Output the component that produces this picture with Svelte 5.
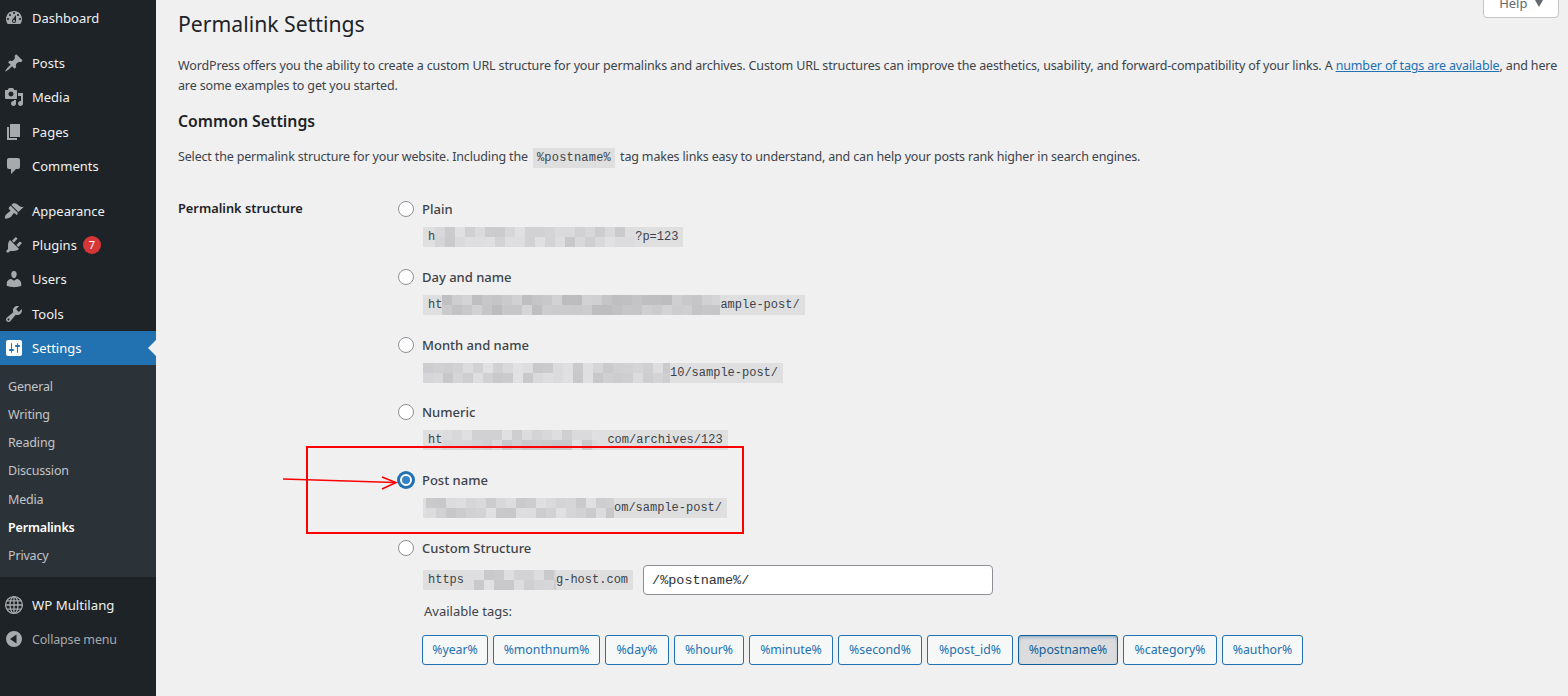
<script lang="ts">
  const icons = {
    dashboard: 'M3.76 16h12.48c1.1-1.37 1.76-3.11 1.76-5 0-4.42-3.58-8-8-8s-8 3.58-8 8c0 1.89.66 3.63 1.76 5zM10 4c.55 0 1 .45 1 1s-.45 1-1 1-1-.45-1-1 .45-1 1-1zM6 6c.55 0 1 .45 1 1s-.45 1-1 1-1-.45-1-1 .45-1 1-1zm8 0c.55 0 1 .45 1 1s-.45 1-1 1-1-.45-1-1 .45-1 1-1zm-5.37 5.55L12 7v6c0 1.1-.9 2-2 2s-2-.9-2-2c0-.57.24-1.08.63-1.45zM4 10c.55 0 1 .45 1 1s-.45 1-1 1-1-.45-1-1 .45-1 1-1zm12 0c.55 0 1 .45 1 1s-.45 1-1 1-1-.45-1-1 .45-1 1-1zm-5 3c0-.55-.45-1-1-1s-1 .45-1 1 .45 1 1 1 1-.45 1-1z',
    posts: 'M10.44 3.02l1.82-1.82 6.36 6.35-1.83 1.82c-1.05-.68-2.48-.57-3.41.36l-.75.75c-.92.93-1.04 2.35-.35 3.41l-1.83 1.82-2.41-2.41-2.8 2.79c-.42.42-3.38 2.71-3.8 2.29s1.86-3.39 2.28-3.81l2.79-2.79L4.1 9.36l1.83-1.82c1.05.69 2.48.57 3.4-.36l.75-.75c.93-.92 1.05-2.35.36-3.41z',
    media: 'M13 11V4c0-.55-.45-1-1-1h-1.67L9 1H5L3.67 3H2c-.55 0-1 .45-1 1v7c0 .55.45 1 1 1h10c.55 0 1-.45 1-1zM7 4.5c1.38 0 2.5 1.12 2.5 2.5S8.38 9.5 7 9.5 4.5 8.38 4.5 7 5.62 4.5 7 4.5zM14 6h5v10.5c0 1.38-1.12 2.5-2.5 2.5S14 17.88 14 16.5s1.12-2.5 2.5-2.5c.17 0 .34.02.5.05V9h-3V6zm-4 8.05V13h2v3.5c0 1.38-1.12 2.5-2.5 2.5S7 17.88 7 16.5 8.12 14 9.5 14c.17 0 .34.02.5.05z',
    pages: 'M6 15V2h10v13H6zm-1 1h8v2H3V5h2v11z',
    comments: 'M5 2h9c1.1 0 2 .9 2 2v7c0 1.1-.9 2-2 2h-2l-5 5v-5H5c-1.1 0-2-.9-2-2V4c0-1.1.9-2 2-2z',
    appearance: 'M14.48 11.06L7.41 3.99l1.5-1.5c.5-.56 2.3-.47 3.51.32 1.21.8 1.43 1.28 2.91 2.1 1.18.64 2.45 1.26 4.45.85zm-.71.71L6.7 4.7 4.93 6.47c-.39.39-.39 1.02 0 1.41l1.06 1.06c.39.39.39 1.03 0 1.42-.6.6-1.43 1.11-2.21 1.69-.35.26-.7.53-1.01.84C1.43 13.23.4 16.96 1.16 17.56c.77.59 4.5-.56 5.85-1.79.31-.31.58-.66.84-1.01.58-.78 1.09-1.61 1.69-2.21.39-.39 1.03-.39 1.42 0l1.06 1.06c.39.39 1.02.39 1.41 0z',
    plugins: 'M13.11 4.36L9.87 7.6 8 5.73l3.24-3.24c.35-.34 1.05-.2 1.56.32.52.51.66 1.21.31 1.55zm-8 1.77l.91-1.12 9.01 9.01-1.19.84c-.71.71-2.63 1.16-3.82 1.16H6.14L4.9 17.26c-.59.59-1.54.59-2.12 0-.59-.58-.59-1.53 0-2.12l1.24-1.24v-3.88c0-1.13.4-3.19 1.09-3.89zm7.26 3.97l3.24-3.24c.34-.35 1.04-.21 1.55.31.52.51.66 1.21.31 1.55l-3.24 3.25z',
    users: 'M10 9.25c-2.27 0-2.73-3.44-2.73-3.44C7 4.02 7.82 2 9.97 2c2.16 0 2.98 2.02 2.71 3.81 0 0-.41 3.44-2.68 3.44zm0 2.57L12.72 10c2.39 0 4.52 2.33 4.52 4.53v2.49s-3.65 1.13-7.24 1.13c-3.65 0-7.24-1.13-7.24-1.13v-2.49c0-2.25 1.94-4.48 4.47-4.48z',
    tools: 'M16.68 9.77c-1.34 1.34-3.3 1.67-4.95.99l-5.41 6.52c-.99.99-2.59.99-3.58 0s-.99-2.59 0-3.57l6.52-5.42c-.68-1.65-.35-3.61.99-4.95 1.28-1.28 3.12-1.62 4.72-1.06l-2.89 2.89 2.82 2.82 2.86-2.87c.53 1.58.18 3.39-1.08 4.65zM3.81 16.21c.4.39 1.04.39 1.43 0 .4-.4.4-1.04 0-1.43-.39-.4-1.03-.4-1.43 0-.39.39-.39 1.03 0 1.43z',
    settings: 'M18 16V4c0-1.1-.9-2-2-2H4c-1.1 0-2 .9-2 2v12c0 1.1.9 2 2 2h12c1.1 0 2-.9 2-2zM8 11h1c.55 0 1 .45 1 1s-.45 1-1 1H8v1.5c0 .28-.22.5-.5.5s-.5-.22-.5-.5V13H6c-.55 0-1-.45-1-1s.45-1 1-1h1V5.5c0-.28.22-.5.5-.5s.5.22.5.5V11zm5-2h-1c-.55 0-1-.45-1-1s.45-1 1-1h1V5.5c0-.28.22-.5.5-.5s.5.22.5.5V7h1c.55 0 1 .45 1 1s-.45 1-1 1h-1v5.5c0 .28-.22.5-.5.5s-.5-.22-.5-.5V9z',
    collapse: 'M10 2a8 8 0 1 0 0 16 8 8 0 0 0 0-16zm2.5 3.5v9L6 10z'
  };

  const groups = [
    [{ name: 'Dashboard', icon: 'dashboard' }],
    [
      { name: 'Posts', icon: 'posts' },
      { name: 'Media', icon: 'media' },
      { name: 'Pages', icon: 'pages' },
      { name: 'Comments', icon: 'comments' }
    ],
    [
      { name: 'Appearance', icon: 'appearance' },
      { name: 'Plugins', icon: 'plugins', badge: 7 },
      { name: 'Users', icon: 'users' },
      { name: 'Tools', icon: 'tools' },
      { name: 'Settings', icon: 'settings', active: true }
    ]
  ];

  const submenu = ['General', 'Writing', 'Reading', 'Discussion', 'Media', 'Permalinks', 'Privacy'];

  // blurred parts of the site url: width in px, then text either side
  const options = [
    { label: 'Plain', pre: 'h', blur: 200, post: '?p=123', seed: 3 },
    { label: 'Day and name', pre: 'ht', blur: 278, post: 'ample-post/', seed: 11, dark: true },
    { label: 'Month and name', pre: '', blur: 247, post: '10/sample-post/', seed: 23 },
    { label: 'Numeric', pre: 'ht', blur: 156, gap: 9, post: 'com/archives/123', seed: 31 },
    { label: 'Post name', pre: '', blur: 188, post: 'om/sample-post/', seed: 47, checked: true, inset: 3 }
  ];

  const tags = [
    { name: 'year', width: 66 },
    { name: 'monthnum', width: 107 },
    { name: 'day', width: 64 },
    { name: 'hour', width: 70 },
    { name: 'minute', width: 84 },
    { name: 'second', width: 84 },
    { name: 'post_id', width: 86 },
    { name: 'postname', width: 100 },
    { name: 'category', width: 94 },
    { name: 'author', width: 81 }
  ];

  function cells(width: number, seed: number, dark = false) {
    const out = [];
    let s = seed * 7919 + 17;
    for (let i = 0; i < Math.ceil(width / 10) * 2; i++) {
      s = (s * 1103515245 + 12345) & 0x7fffffff;
      const base = dark ? 188 : 200;
      const v = base + ((s >> 8) % 26);
      out.push(`rgb(${v},${v},${v + 2})`);
    }
    return out;
  }
</script>

{#snippet blurred(width, seed, dark)}
  <span class="blur" style="width:{width}px">
    {#each cells(width, seed, dark) as color}
      <i style="background:{color}"></i>
    {/each}
  </span>
{/snippet}

<div class="page">
  <nav class="sidebar">
    {#each groups as group}
      <ul class="menu">
        {#each group as item}
          <li class="item" class:active={item.active}>
            <svg viewBox="0 0 20 20" class="icon"><path d={icons[item.icon]} fill-rule="evenodd" /></svg>
            <span>{item.name}</span>
            {#if item.badge}<b class="badge">{item.badge}</b>{/if}
          </li>
        {/each}
      </ul>
    {/each}
    <ul class="sub">
      {#each submenu as name}
        <li class:current={name === 'Permalinks'}>{name}</li>
      {/each}
    </ul>
    <ul class="menu bottom">
      <li class="item">
        <svg viewBox="0 0 20 20" class="icon globe">
          <circle cx="10" cy="10" r="8.4" />
          <ellipse cx="10" cy="10" rx="4" ry="8.4" />
          <path d="M10 1.6v16.8M1.6 10h16.8M2.8 5.8h14.4M2.8 14.2h14.4" />
        </svg>
        <span>WP Multilang</span>
      </li>
      <li class="item collapse">
        <svg viewBox="0 0 20 20" class="icon"><path d={icons.collapse} fill-rule="evenodd" /></svg>
        <span>Collapse menu</span>
      </li>
    </ul>
  </nav>

  <main class="content">
    <h1>Permalink Settings</h1>
    <p class="intro">
      WordPress offers you the ability to create a custom URL structure for your permalinks and archives. Custom URL structures can improve the aesthetics, usability, and forward-compatibility of your links. A <a href="#tags">number of tags are available</a>, and here<br />are some examples to get you started.
    </p>
    <h2>Common Settings</h2>
    <p class="lead">
      Select the permalink structure for your website. Including the <code class="inline">%postname%</code> tag makes links easy to understand, and can help your posts rank higher in search engines.
    </p>

    <div class="form">
      <div class="th">Permalink structure</div>
      <div class="td">
        {#each options as opt}
          <div class="option">
            <label>
              <input type="radio" name="structure" checked={opt.checked} />
              {opt.label}
            </label>
            <code class="url" class:flush={!opt.pre}>{#if opt.inset}<span style="width:{opt.inset}px" class="spacer"></span>{/if}{opt.pre}{@render blurred(opt.blur, opt.seed, opt.dark)}{#if opt.gap}<span style="width:{opt.gap}px" class="spacer"></span>{/if}{opt.post}</code>
          </div>
        {/each}

        <div class="option custom">
          <label>
            <input type="radio" name="structure" />
            Custom Structure
          </label>
          <div class="custom-row">
            <code class="url">https{@render blurred(92, 59)}g-host.com</code>
            <input class="text" type="text" value="/%postname%/" />
          </div>
          <div class="avail">Available tags:</div>
          <div class="tags">
            {#each tags as tag}
              <button type="button" class="tag" class:on={tag.name === 'postname'} style="width:{tag.width}px">%{tag.name}%</button>
            {/each}
          </div>
        </div>
      </div>
    </div>
  </main>

  <button type="button" class="help">Help <span class="caret"></span></button>

  <div class="callout"></div>
  <svg class="arrow" viewBox="0 0 120 20" width="120" height="20">
    <path d="M0 6 L112 9.5" />
    <path d="M99 4 L113 9.5 L99 16" />
  </svg>
</div>

<style>
  :global(body) {
    margin: 0;
    background: #f0f0f1;
    overflow: hidden;
  }

  .page {
    position: relative;
    display: flex;
    height: 696px;
    overflow: hidden;
    font-family: "Noto Sans", "Open Sans", sans-serif;
    font-size: 13px;
    line-height: 20px;
    color: #3c434a;
  }

  .sidebar {
    flex: 0 0 156px;
    background: #1d2327;
    padding-top: 1px;
    color: #f0f0f1;
  }

  ul {
    list-style: none;
    margin: 0;
    padding: 0;
  }

  .menu {
    margin-bottom: 11px;
  }

  .menu:nth-of-type(3) {
    margin-bottom: 0;
  }

  .item {
    position: relative;
    display: flex;
    align-items: center;
    height: 34.2px;
    padding-left: 4px;
    font-size: 13px;
  }

  .item > span {
    margin-left: 8px;
  }

  .icon {
    width: 20px;
    height: 20px;
    flex: none;
    fill: #a7aaad;
  }

  .item.active {
    background: #2271b1;
    color: #fff;
  }

  .item.active .icon {
    fill: #fff;
  }

  .item.active::after {
    content: "";
    position: absolute;
    right: 0;
    top: 9px;
    border: 8px solid transparent;
    border-right-color: #f0f0f1;
    border-left-width: 0;
  }

  .badge {
    display: flex;
    align-items: center;
    justify-content: center;
    width: 18px;
    height: 18px;
    margin-left: 6px;
    border-radius: 50%;
    background: #d63638;
    color: #fff;
    font-size: 11px;
    font-weight: 400;
  }

  .sub {
    background: #2c3338;
    padding: 8px 0 6px;
    height: 198px;
    color: #c3c4c7;
    margin-bottom: 11px;
    font-size: 12.5px;
    letter-spacing: -0.17px;
  }

  .sub li {
    height: 28.2px;
    line-height: 28.2px;
    padding-left: 8px;
  }

  .sub .current {
    color: #fff;
    font-weight: 600;
  }

  .globe {
    fill: none;
    stroke: #a7aaad;
    stroke-width: 1.3;
  }

  .bottom .item:first-child span {
    font-size: 13.2px;
  }

  .collapse {
    color: #a7aaad;
  }

  .collapse span {
    padding-top: 2px;
    font-size: 12.5px;
    letter-spacing: -0.17px;
  }

  .content {
    flex: 1;
    min-width: 0;
    padding: 9px 0 0 22px;
    white-space: nowrap;
  }

  h1 {
    margin: 0 0 17px;
    font-size: 21.2px;
    line-height: 30px;
    font-weight: 400;
    color: #1d2327;
  }

  .intro,
  .lead {
    margin: 0;
    font-size: 12.5px;
    letter-spacing: -0.165px;
  }

  .intro {
    letter-spacing: -0.145px;
  }

  a {
    color: #2271b1;
    text-decoration: underline;
  }

  h2 {
    margin: 15px 0 16px;
    font-size: 15.8px;
    line-height: 20px;
    font-weight: 600;
    color: #1d2327;
  }

  code {
    font-family: "Liberation Mono", monospace;
    font-size: 12px;
    letter-spacing: 0;
    background: rgba(0, 0, 0, 0.07);
    color: #3c434a;
  }

  .inline {
    display: inline-block;
    height: 20px;
    margin: 0 2px;
    padding: 0 4px;
    letter-spacing: 0.2px;
  }

  .form {
    display: flex;
    margin-top: 30px;
  }

  .th {
    flex: 0 0 220px;
    font-size: 12.8px;
    font-weight: 600;
    color: #1d2327;
  }

  .td {
    flex: 1;
    padding-top: 1px;
  }

  .option {
    height: 67.8px;
  }

  label {
    display: flex;
    align-items: center;
    gap: 8px;
    height: 20px;
    font-weight: 500;
    color: #3c434a;
  }

  input[type="radio"] {
    appearance: none;
    position: relative;
    width: 16px;
    height: 16px;
    margin: 0;
    flex: none;
    border: 1px solid #8c8f94;
    border-radius: 50%;
    background: #fff;
  }

  input[type="radio"]:checked {
    border: 2px solid #2271b1;
    box-shadow: 0 0 0 1px #2271b1;
  }

  input[type="radio"]:checked::before {
    content: "";
    position: absolute;
    inset: 2px;
    border-radius: 50%;
    background: #3582c4;
  }

  .url {
    display: inline-flex;
    align-items: center;
    height: 20px;
    margin: 8px 0 0 25px;
    padding: 0 5px;
    white-space: pre;
    line-height: 20px;
  }

  .url.flush {
    padding-left: 0;
  }

  .spacer {
    display: inline-block;
  }

  .blur {
    display: inline-grid;
    grid-auto-flow: column;
    grid-template-rows: 10px 10px;
    grid-auto-columns: 10px;
    height: 20px;
    overflow: hidden;
  }

  .custom {
    height: auto;
  }

  .custom-row {
    display: flex;
    align-items: center;
    gap: 10px;
    height: 29px;
    margin-top: 8px;
  }

  .custom-row .url {
    margin-top: 0;
  }

  .text {
    box-sizing: border-box;
    width: 350px;
    height: 30px;
    padding: 0 8px;
    border: 1px solid #8c8f94;
    border-radius: 4px;
    background: #fff;
    font-family: "Liberation Mono", monospace;
    font-size: 13.5px;
    color: #2c3338;
  }

  .avail {
    margin: 6px 0 0 26px;
  }

  .tags {
    display: flex;
    gap: 5px;
    margin: 14px 0 0 24px;
  }

  .tag {
    height: 30px;
    padding: 0;
    border: 1px solid #2271b1;
    border-radius: 3px;
    background: #f6f7f7;
    color: #2271b1;
    font: inherit;
    font-size: 12.3px;
  }

  .tag.on {
    background: #dcdcde;
    border-color: #135e96;
    color: #135e96;
    box-shadow: inset 0 2px 5px -3px #135e96;
  }

  .help {
    position: absolute;
    top: -12px;
    right: 9px;
    width: 76px;
    height: 30px;
    border: 1px solid #c3c4c7;
    border-radius: 0 0 4px 4px;
    background: #fff;
    color: #646970;
    font: inherit;
  }

  .caret {
    display: inline-block;
    margin-left: 4px;
    border: 4.5px solid transparent;
    border-top: 7px solid #646970;
    border-bottom: 0;
    vertical-align: 1px;
  }

  .callout {
    position: absolute;
    left: 306px;
    top: 446px;
    width: 434px;
    height: 84px;
    border: 2px solid #f00;
    pointer-events: none;
  }

  .arrow {
    position: absolute;
    left: 283px;
    top: 473px;
    fill: none;
    stroke: #f00;
    stroke-width: 1.6;
  }
</style>
